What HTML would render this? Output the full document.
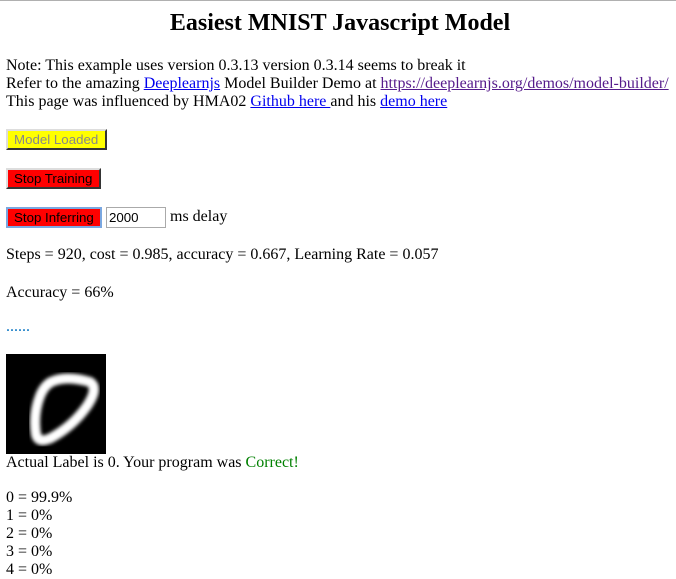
<!DOCTYPE html>
<html><head><style>
html,body{margin:0;padding:0;background:#fff}
body{width:676px;height:579px;overflow:hidden;position:relative;font-family:"Liberation Serif",serif;font-size:16px;color:#000;border-top:1px solid #b0b0b0;box-sizing:border-box}
.a{position:absolute;left:6px;white-space:nowrap;line-height:18px}
h2{position:absolute;top:8px;left:2px;width:676px;margin:0;text-align:center;font-family:"Liberation Serif",serif;font-size:24px;line-height:28px;font-weight:bold}
a{color:#0000ee}
a.v{color:#551a8b}
.b{position:absolute;left:6px;height:21px;font-family:"Liberation Sans",sans-serif;font-size:13.3px;line-height:17px;padding:0 6px;box-sizing:border-box;border:2px outset #ddd;border-right-color:#888;border-bottom-color:#888}
</style></head><body>
<h2>Easiest MNIST Javascript Model</h2>
<div class="a" style="top:56px">Note: This example uses version 0.3.13 version 0.3.14 seems to break it<br>Refer to the amazing <a href="#">Deeplearnjs</a> Model Builder Demo at <a class="v" href="#">https://deeplearnjs.org/demos/model-builder/</a><br>This page was influenced by HMA02 <a href="#">Github here </a>and his <a href="#">demo here</a></div>
<div class="b" style="top:128px;width:101px;background:#ff0;color:#888">Model Loaded</div>
<div class="b" style="top:167px;width:95px;background:#f00;color:#000">Stop Training</div>
<div class="b" style="top:206px;width:96px;background:#f00;color:#000;border:2px solid #7aa7e0">Stop Inferring</div>
<div style="position:absolute;left:106px;top:206px;width:60px;height:21px;box-sizing:border-box;border:1px solid #aaa;font-family:'Liberation Sans',sans-serif;font-size:13.3px;line-height:19px;padding-left:2px">2000</div>
<div class="a" style="left:170px;top:207px">ms delay</div>
<div class="a" style="top:245px">Steps = 920, cost = 0.985, accuracy = 0.667, Learning Rate = 0.057</div>
<div class="a" style="top:283px">Accuracy = 66%</div>
<div class="a" style="top:317px;color:#0070c0">......</div>
<svg style="position:absolute;left:6px;top:353px" width="100" height="100"><defs><filter id="f"><feGaussianBlur stdDeviation="1.8"/></filter></defs><rect width="100" height="100" fill="#000"/><path d="M45 28 Q60 21 84 28 Q93 34 81 52 Q67 72 45 84 Q32 90 30 80 Q27 60 34 42 Q38 32 45 28 Z" fill="none" stroke="#fff" stroke-width="10" filter="url(#f)"/></svg>
<div class="a" style="top:453px">Actual Label is 0. Your program was <span style="color:#008000">Correct!</span></div>
<div class="a" style="top:488px">0 = 99.9%<br>1 = 0%<br>2 = 0%<br>3 = 0%<br>4 = 0%</div>
</body></html>
